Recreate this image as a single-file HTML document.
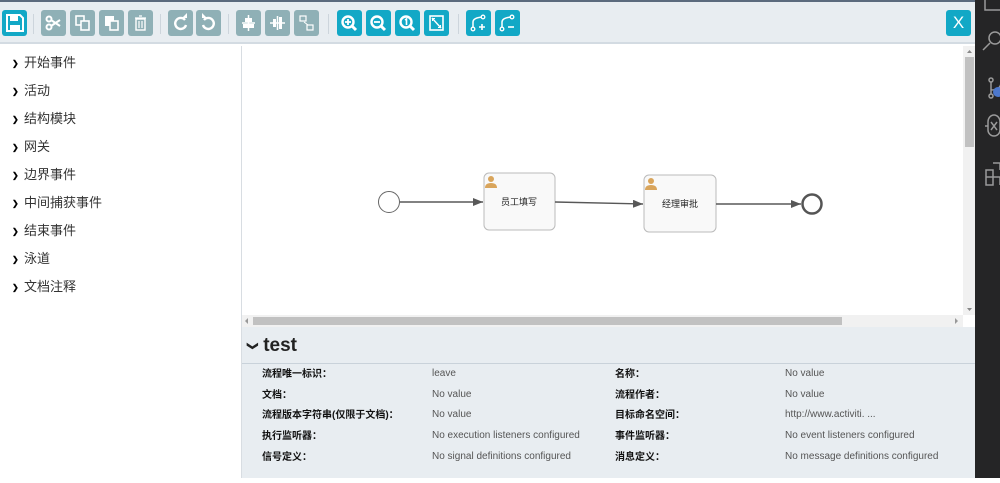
<!DOCTYPE html>
<html><head><meta charset="utf-8">
<style>
*{margin:0;padding:0;box-sizing:border-box}
body{width:1000px;height:478px;overflow:hidden;background:#fff;font-family:"Liberation Sans","Noto Sans CJK SC",sans-serif;position:relative}
#top{position:absolute;left:0;top:0;width:975px;height:2px;background:#5b6a7d}
#tb{position:absolute;left:0;top:2px;width:975px;height:42px;background:#e8edf1;border-bottom:2px solid #d3dbe2}
.b{position:absolute;top:8px;width:25px;height:26px;border-radius:3px;background:#8fb0b6}
.b.t{background:#12a8c6}
.b svg{position:absolute;left:0;top:0}
.sep{position:absolute;top:12px;width:1px;height:20px;background:#cdd5dc}
#left{position:absolute;left:0;top:46px;width:242px;height:432px;background:#fff;border-right:1px solid #d8dde2}
.it{position:absolute;left:12px;font-size:13px;line-height:16px;color:#333}
.it b{display:inline-block;width:12px;font-size:8px;color:#000;font-weight:900;vertical-align:1px}
#canvas{position:absolute;left:242px;top:46px;width:733px;height:281px;background:#fff}
#props{position:absolute;left:242px;top:327px;width:733px;height:151px;background:#e8edf1}
.l{position:absolute;font-size:10px;line-height:12px;color:#111;font-weight:600}
.v{position:absolute;font-size:10px;line-height:12px;color:#555}
#side{position:absolute;left:975px;top:0;width:25px;height:478px;background:#252526}
</style></head><body>
<div id="top"></div>
<div id="tb">
 <div class="b t" style="left:2px"><svg width="25" height="26" viewBox="0 0 25 26"><path d="M5 5h13l3 3v13H5z" fill="none" stroke="#fff" stroke-width="2"/><rect x="8" y="6" width="8" height="5" fill="#fff"/><rect x="8" y="15" width="10" height="5" fill="#fff"/></svg></div>
 <div class="sep" style="left:33px"></div>
 <div class="b" style="left:41px"><svg width="25" height="26"><circle cx="8" cy="9" r="2.5" fill="none" stroke="#fff" stroke-width="2"/><circle cx="8" cy="17" r="2.5" fill="none" stroke="#fff" stroke-width="2"/><path d="M10 10l9 6M10 16l9-6" stroke="#fff" stroke-width="2"/></svg></div>
 <div class="b" style="left:70px"><svg width="25" height="26"><rect x="6" y="6" width="8" height="9" fill="none" stroke="#fff" stroke-width="1.6"/><rect x="11" y="11" width="8" height="9" fill="#8fb0b6" stroke="#fff" stroke-width="1.6"/></svg></div>
 <div class="b" style="left:99px"><svg width="25" height="26"><rect x="6" y="6" width="9" height="10" fill="#fff"/><rect x="11" y="11" width="8" height="9" fill="#8fb0b6" stroke="#fff" stroke-width="1.6"/></svg></div>
 <div class="b" style="left:128px"><svg width="25" height="26"><rect x="8" y="9" width="9" height="11" fill="none" stroke="#fff" stroke-width="1.4"/><path d="M7 8h11M11 6h3M11 11v7M14 11v7" stroke="#fff" stroke-width="1.2"/></svg></div>
 <div class="sep" style="left:160px"></div>
 <div class="b" style="left:168px"><svg width="25" height="26"><path d="M17 10a5.5 5.5 0 1 0 1 5" fill="none" stroke="#fff" stroke-width="2.4"/><path d="M14 8h5V3z" fill="#fff"/></svg></div>
 <div class="b" style="left:196px"><svg width="25" height="26"><path d="M8 10a5.5 5.5 0 1 1 -1 5" fill="none" stroke="#fff" stroke-width="2.4"/><path d="M11 8H6V3z" fill="#fff"/></svg></div>
 <div class="sep" style="left:228px"></div>
 <div class="b" style="left:236px"><svg width="25" height="26"><path d="M12.5 5v16M6 13h13" stroke="#fff" stroke-width="1.5"/><rect x="9" y="8" width="7" height="4" fill="#fff"/><rect x="7" y="14" width="11" height="4" fill="#fff"/></svg></div>
 <div class="b" style="left:265px"><svg width="25" height="26"><path d="M5 13h15M12.5 6v14" stroke="#fff" stroke-width="1.5"/><rect x="8" y="9" width="3" height="8" fill="#fff"/><rect x="14" y="7" width="3" height="12" fill="#fff"/></svg></div>
 <div class="b" style="left:294px"><svg width="25" height="26"><rect x="6" y="6" width="6" height="5" fill="none" stroke="#fff" stroke-width="1.2"/><rect x="13" y="15" width="6" height="5" fill="none" stroke="#fff" stroke-width="1.2"/><path d="M10 12l4 3" stroke="#fff"/></svg></div>
 <div class="sep" style="left:328px"></div>
 <div class="b t" style="left:337px"><svg width="25" height="26"><circle cx="11" cy="12" r="5.5" fill="none" stroke="#fff" stroke-width="2.4"/><path d="M15 16l4 4" stroke="#fff" stroke-width="3"/><path d="M8 12h6M11 9v6" stroke="#fff" stroke-width="1.8"/></svg></div>
 <div class="b t" style="left:366px"><svg width="25" height="26"><circle cx="11" cy="12" r="5.5" fill="none" stroke="#fff" stroke-width="2.4"/><path d="M15 16l4 4" stroke="#fff" stroke-width="3"/><path d="M8 12h6" stroke="#fff" stroke-width="1.8"/></svg></div>
 <div class="b t" style="left:395px"><svg width="25" height="26"><circle cx="11" cy="12" r="5.5" fill="none" stroke="#fff" stroke-width="2.4"/><path d="M15 16l4 4" stroke="#fff" stroke-width="3"/><path d="M10 10l1.5-1v6" stroke="#fff" stroke-width="1.6" fill="none"/></svg></div>
 <div class="b t" style="left:424px"><svg width="25" height="26"><rect x="6" y="6" width="13" height="14" fill="none" stroke="#fff" stroke-width="1.6"/><path d="M8 8l9 10" stroke="#fff" stroke-width="1.4"/><path d="M8 8h3v1H9v2H8zM17 18h-3v-1h2v-2h1z" fill="#fff"/></svg></div>
 <div class="sep" style="left:458px"></div>
 <div class="b t" style="left:466px"><svg width="25" height="26"><circle cx="7" cy="19" r="1.8" fill="none" stroke="#fff" stroke-width="1.3"/><circle cx="17" cy="7" r="1.8" fill="none" stroke="#fff" stroke-width="1.3"/><path d="M7 17V12q0-4 9-5" fill="none" stroke="#fff" stroke-width="1.5"/><path d="M13 17h6M16 14v6" stroke="#fff" stroke-width="1.6"/></svg></div>
 <div class="b t" style="left:495px"><svg width="25" height="26"><circle cx="7" cy="19" r="1.8" fill="none" stroke="#fff" stroke-width="1.3"/><circle cx="17" cy="7" r="1.8" fill="none" stroke="#fff" stroke-width="1.3"/><path d="M7 17V12q0-4 9-5" fill="none" stroke="#fff" stroke-width="1.5"/><path d="M13 17h6" stroke="#fff" stroke-width="1.6"/></svg></div>
 <div class="b t" style="left:946px;color:#fff;font-size:17px;text-align:center;line-height:26px">X</div>
</div>
<div id="left">
 <div class="it" style="top:9px"><b>❯</b>开始事件</div>
 <div class="it" style="top:37px"><b>❯</b>活动</div>
 <div class="it" style="top:65px"><b>❯</b>结构模块</div>
 <div class="it" style="top:93px"><b>❯</b>网关</div>
 <div class="it" style="top:121px"><b>❯</b>边界事件</div>
 <div class="it" style="top:149px"><b>❯</b>中间捕获事件</div>
 <div class="it" style="top:177px"><b>❯</b>结束事件</div>
 <div class="it" style="top:205px"><b>❯</b>泳道</div>
 <div class="it" style="top:233px"><b>❯</b>文档注释</div>
</div>
<div id="canvas">
<svg width="733" height="281" style="position:absolute;left:0;top:0">
 <defs><marker id="a" markerWidth="10" markerHeight="8" refX="10" refY="4" orient="auto" markerUnits="userSpaceOnUse"><path d="M0 0L10 4L0 8z" fill="#585858"/></marker></defs>
 <circle cx="147" cy="156" r="10.5" fill="#fff" stroke="#666" stroke-width="1"/>
 <path d="M158 156H241" stroke="#585858" stroke-width="1.4" marker-end="url(#a)"/>
 <rect x="242" y="127" width="71" height="57" rx="5" fill="#f9f9f9" stroke="#bbb"/>
 <text x="277" y="159" font-size="9" text-anchor="middle" fill="#222" font-family="Noto Sans CJK SC">员工填写</text>
 <path d="M313 156L401 158" stroke="#585858" stroke-width="1.4" marker-end="url(#a)"/>
 <rect x="402" y="129" width="72" height="57" rx="5" fill="#f9f9f9" stroke="#bbb"/>
 <text x="438" y="161" font-size="9" text-anchor="middle" fill="#222" font-family="Noto Sans CJK SC">经理审批</text>
 <path d="M474 158H559" stroke="#585858" stroke-width="1.4" marker-end="url(#a)"/>
 <circle cx="570" cy="158" r="9.5" fill="#fff" stroke="#555" stroke-width="2.5"/>
 <g fill="#d9a55c"><circle cx="249" cy="133" r="3"/><path d="M243 142q0-5 6-5t6 5z"/><circle cx="409" cy="135" r="3"/><path d="M403 144q0-5 6-5t6 5z"/></g>
 <rect x="721" y="0" width="12" height="269" fill="#f1f1f1"/>
 <rect x="723" y="11" width="9" height="90" fill="#c1c1c1"/>
 <path d="M725 7l2.5-3 2.5 3zM725 262l2.5 3 2.5-3z" fill="#888"/>
 <rect x="0" y="269" width="721" height="12" fill="#f1f1f1"/>
 <rect x="11" y="271" width="589" height="8" fill="#c1c1c1"/>
 <path d="M6 272l-3 3 3 3zM713 272l3 3-3 3z" fill="#999"/>
</svg>
</div>
<div id="props">
 <div style="position:absolute;left:6px;top:7px;font-size:19px;line-height:24px;font-weight:bold;color:#222"><span style="font-size:11px;display:inline-block;transform:rotate(90deg);margin-right:6px;vertical-align:2px">❯</span>test</div>
 <div style="position:absolute;left:0;top:36px;width:733px;height:1px;background:#c9d2da"></div>
 <div class="l" style="left:20px;top:42px">流程唯一标识：</div><div class="v" style="left:190px;top:41px">leave</div>
 <div class="l" style="left:373px;top:42px">名称：</div><div class="v" style="left:543px;top:41px">No value</div>
 <div class="l" style="left:20px;top:63px">文档：</div><div class="v" style="left:190px;top:62px">No value</div>
 <div class="l" style="left:373px;top:63px">流程作者：</div><div class="v" style="left:543px;top:62px">No value</div>
 <div class="l" style="left:20px;top:83px">流程版本字符串(仅限于文档)：</div><div class="v" style="left:190px;top:82px">No value</div>
 <div class="l" style="left:373px;top:83px">目标命名空间：</div><div class="v" style="left:543px;top:82px">http://www.activiti. ...</div>
 <div class="l" style="left:20px;top:104px">执行监听器：</div><div class="v" style="left:190px;top:103px">No execution listeners configured</div>
 <div class="l" style="left:373px;top:104px">事件监听器：</div><div class="v" style="left:543px;top:103px">No event listeners configured</div>
 <div class="l" style="left:20px;top:125px">信号定义：</div><div class="v" style="left:190px;top:124px">No signal definitions configured</div>
 <div class="l" style="left:373px;top:125px">消息定义：</div><div class="v" style="left:543px;top:124px">No message definitions configured</div>
</div>
<div id="side">
<svg width="25" height="478" fill="none" stroke="#9a9a9a" stroke-width="1.5">
 <path d="M10 0v10h15"/>
 <circle cx="20" cy="38" r="6"/><path d="M15 43l-7 7"/>
 <circle cx="16" cy="80" r="2"/><circle cx="16" cy="96" r="2"/><path d="M16 82v12M16 90q10 0 10-8"/>
 <circle cx="23" cy="92" r="5" fill="#4d78cc" stroke="none"/>
 <path d="M13 122a6 7 0 0 1 12 0v8a6 6 0 0 1-12 0z M16 122l6 8M22 122l-6 8M10 126h3"/>
 <path d="M11 170h7v7h-7zM11 177h7v8h-7zM18 177h7v8M18 163h7v7"/>
</svg>
</div>
</body></html>
